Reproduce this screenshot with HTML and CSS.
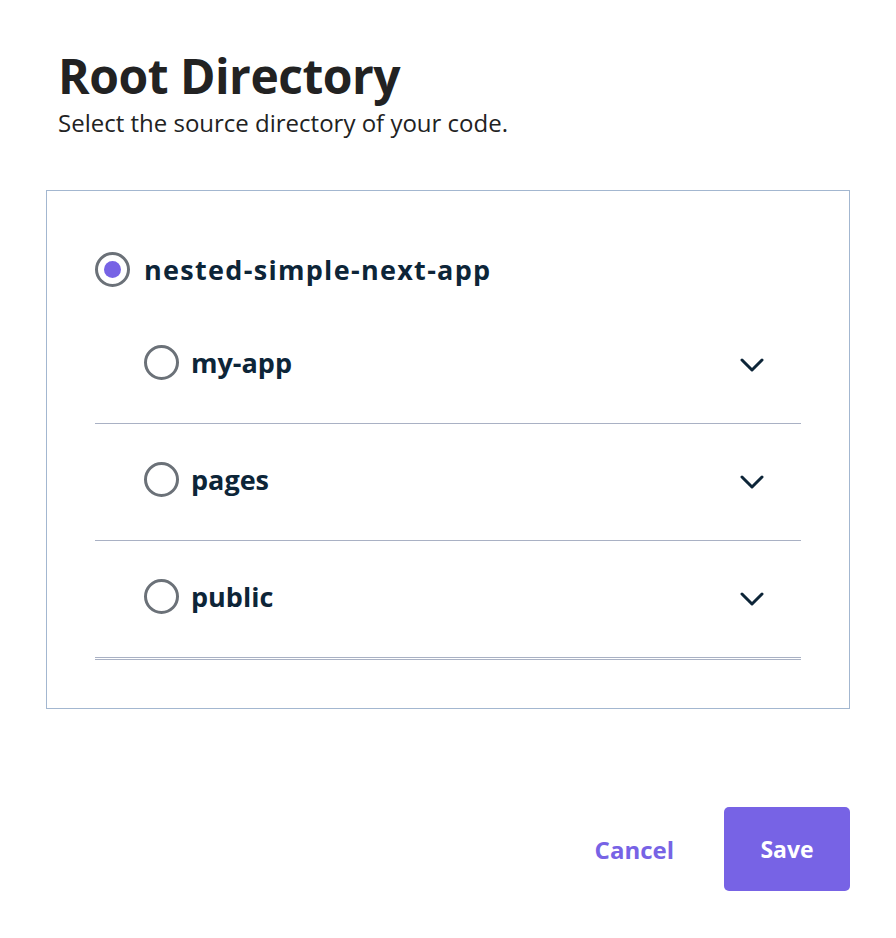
FILE: index.html
```html
<!DOCTYPE html>
<html lang="en">
<head>
<meta charset="utf-8">
<title>Root Directory</title>
<link rel="stylesheet" href="styles.css">
</head>
<body>
<div class="page">
  <header class="header">
    <h1 class="title">Root Directory</h1>
    <p class="subtitle">Select the source directory of your code.</p>
  </header>

  <section class="tree">
    <label class="root-row">
      <span class="radio radio-checked"></span>
      <span class="label label-root">nested-simple-next-app</span>
    </label>
    <ul class="children">
      <li class="child">
        <span class="radio"></span>
        <span class="label">my-app</span>
        <svg class="chevron" width="26" height="16" viewBox="0 0 26 16"><polyline points="3,3 13,13 23,3" fill="none" stroke="#0d2538" stroke-width="3" stroke-linecap="round" stroke-linejoin="round"/></svg>
      </li>
      <li class="child">
        <span class="radio"></span>
        <span class="label">pages</span>
        <svg class="chevron" width="26" height="16" viewBox="0 0 26 16"><polyline points="3,3 13,13 23,3" fill="none" stroke="#0d2538" stroke-width="3" stroke-linecap="round" stroke-linejoin="round"/></svg>
      </li>
      <li class="child">
        <span class="radio"></span>
        <span class="label">public</span>
        <svg class="chevron" width="26" height="16" viewBox="0 0 26 16"><polyline points="3,3 13,13 23,3" fill="none" stroke="#0d2538" stroke-width="3" stroke-linecap="round" stroke-linejoin="round"/></svg>
      </li>
    </ul>
  </section>

  <footer class="actions">
    <button class="btn btn-cancel" type="button">Cancel</button>
    <button class="btn btn-save" type="button">Save</button>
  </footer>
</div>
</body>
</html>
```

FILE: styles.css
```css
* {
  box-sizing: border-box;
}

html, body {
  margin: 0;
  padding: 0;
  background: #ffffff;
}

body {
  font-family: "Open Sans", "Noto Sans", sans-serif;
  color: #222222;
}

.page {
  padding: 48px 46px 0 46px;
}

.header {
  padding-left: 12px;
}

.title {
  margin: 0;
  font-size: 48px;
  line-height: 56px;
  font-weight: 700;
  letter-spacing: -0.5px;
  color: #222222;
}

.subtitle {
  margin: 3px 0 0 0;
  font-size: 24px;
  line-height: 32px;
  font-weight: 400;
  color: #222222;
}

.tree {
  margin-top: 51px;
  border: 1px solid #a3b7d0;
  padding: 61px 48px 48px 48px;
}

.root-row {
  display: flex;
  align-items: center;
  gap: 14px;
  height: 35px;
}

.radio {
  flex: none;
  width: 35px;
  height: 35px;
  border-radius: 50%;
  border: 3px solid #6b7178;
  display: flex;
  align-items: center;
  justify-content: center;
  background: #ffffff;
}

.radio-checked::after {
  content: "";
  width: 17px;
  height: 17px;
  border-radius: 50%;
  background: #7763e5;
}

.label {
  font-size: 27px;
  line-height: 35px;
  font-weight: 700;
  color: #0d2538;
}

.label-root {
  letter-spacing: 1.3px;
}

.children {
  list-style: none;
  margin: 20px 0 0 0;
  padding: 0;
  border-bottom: 3px double #a9b1c4;
}

.child {
  display: flex;
  align-items: center;
  gap: 12px;
  padding: 38px 36px 43px 49px;
  border-bottom: 1px solid #a9b1c4;
}

.child:last-child {
  border-bottom: none;
}

.child .label {
  flex: 1;
}

.chevron {
  flex: none;
  margin-top: 4px;
}

.actions {
  display: flex;
  justify-content: flex-end;
  align-items: center;
  gap: 26px;
  margin-top: 98px;
}

.btn {
  font-family: "Open Sans", "Noto Sans", sans-serif;
  font-weight: 700;
  border: none;
  cursor: pointer;
}

.btn-cancel {
  background: transparent;
  color: #7763e5;
  font-size: 24px;
  padding: 0 24px;
  height: 84px;
}

.btn-save {
  background: #7763e5;
  color: #ffffff;
  font-size: 23px;
  width: 126px;
  height: 84px;
  border-radius: 5px;
}
```
